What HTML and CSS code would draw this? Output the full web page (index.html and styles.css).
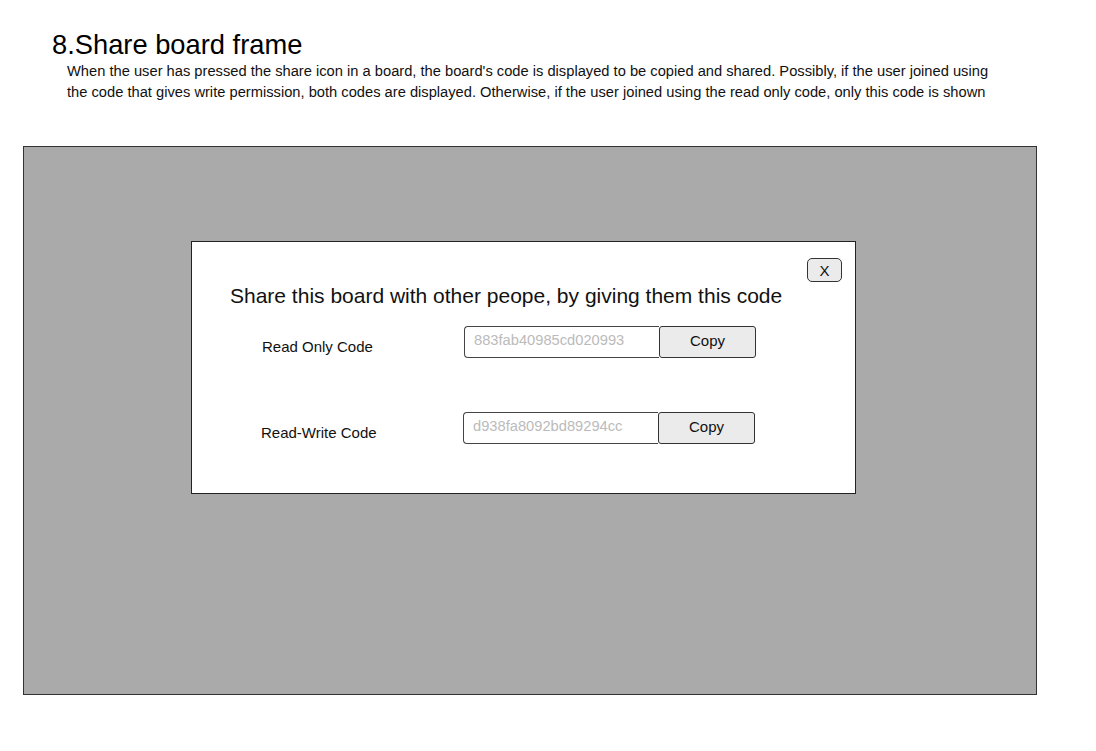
FILE: index.html
```html
<!DOCTYPE html>
<html>
<head>
<meta charset="utf-8">
<link rel="stylesheet" href="styles.css">
</head>
<body>
<header class="intro">
  <h1 class="title">8.Share board frame</h1>
  <p class="desc">When the user has pressed the share icon in a board, the board's code is displayed to be copied and shared. Possibly, if the user joined using<br>the code that gives write permission, both codes are displayed. Otherwise, if the user joined using the read only code, only this code is shown</p>
</header>
<main class="frame">
  <section class="dialog">
    <div class="dialog-top">
      <button class="close">X</button>
    </div>
    <h2 class="dialog-title">Share this board with other peope, by giving them this code</h2>
    <div class="row row-ro">
      <span class="label">Read Only Code</span>
      <div class="field">
        <span class="code">883fab40985cd020993</span>
        <button class="copy">Copy</button>
      </div>
    </div>
    <div class="row row-rw">
      <span class="label">Read-Write Code</span>
      <div class="field">
        <span class="code">d938fa8092bd89294cc</span>
        <button class="copy">Copy</button>
      </div>
    </div>
  </section>
</main>
</body>
</html>
```
FILE: styles.css
```css
* { box-sizing: border-box; }
html, body { margin: 0; padding: 0; background: #fff; }
body { font-family: "Liberation Sans", Arial, sans-serif; color: #000; }

.intro { padding-top: 29px; }
.title {
  margin: 0 0 0 52px;
  font-size: 27.3px;
  font-weight: normal;
  line-height: 32px;
}
.desc {
  margin: 0 0 0 67px;
  font-size: 14.7px;
  line-height: 21px;
  color: #111;
}

.frame {
  margin: 43px 0 0 23px;
  width: 1014px;
  height: 549px;
  background: #aaaaaa;
  border: 1px solid #333;
  padding: 94px 0 0 167px;
}

.dialog {
  width: 665px;
  height: 253px;
  background: #fff;
  border: 1px solid #222;
  display: flex;
  flex-direction: column;
}
.dialog-top {
  display: flex;
  justify-content: flex-end;
  padding: 16px 13px 0 0;
}
.close {
  width: 35px;
  height: 24px;
  padding: 0;
  font-family: inherit;
  font-size: 15px;
  color: #111;
  background: #ebebeb;
  border: 1px solid #333;
  border-radius: 5px;
}
.dialog-title {
  margin: 0 0 0 38px;
  font-size: 21px;
  font-weight: normal;
  line-height: 28px;
  color: #111;
}
.row {
  display: flex;
  align-items: center;
  margin-left: 70px;
}
.row-ro { margin-top: 16px; }
.row-rw { margin-top: 54px; margin-left: 69px; }
.label {
  width: 202px;
  font-size: 15px;
  padding-top: 8px;
  color: #111;
}
.field {
  display: flex;
  width: 292px;
  height: 32px;
}
.code {
  flex: 0 0 195px;
  border: 1px solid #444;
  border-right: none;
  border-radius: 4px 0 0 4px;
  font-size: 14.7px;
  color: #bbb;
  padding: 5px 0 0 9px;
}
.copy {
  flex: 1;
  padding: 0 0 4px 0;
  font-family: inherit;
  font-size: 15px;
  color: #111;
  background: #ebebeb;
  border: 1px solid #333;
  border-radius: 3px;
}
```
